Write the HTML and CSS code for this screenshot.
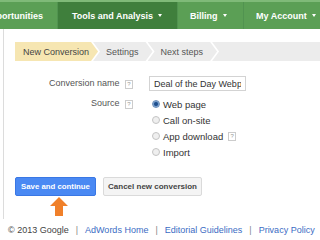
FILE: index.html
```html
<!DOCTYPE html>
<html>
<head>
        <meta charset="UTF-8">
        <title>New Conversion</title>
        <link rel="stylesheet" href="styles.css">
</head>
<body>
        <div id="nav">
                <span class="tab" id="tab_opp">Opportunities</span>
                <span class="tab current" id="tab_tools">Tools and Analysis <i class="caret"></i></span>
                <span class="tab" id="tab_billing">Billing <i class="caret"></i></span>
                <span class="tab" id="tab_account">My Account <i class="caret"></i></span>
        </div>

        <div id="main">
                <div id="steps">
                        <span class="step first active">New Conversion</span>
                        <span class="step">Settings</span>
                        <span class="step">Next steps</span>
                        <span class="step rest"></span>
                </div>

                <div class="row">
                        <label class="lbl">Conversion name <i class="help">?</i></label>
                        <div class="field"><input type="text" value="Deal of the Day Webpage"></div>
                </div>
                <div class="row">
                        <label class="lbl">Source <i class="help">?</i></label>
                        <div class="field radios">
                                <div class="opt"><span class="radio on"></span>Web page</div>
                                <div class="opt"><span class="radio"></span>Call on-site</div>
                                <div class="opt"><span class="radio"></span>App download <i class="help">?</i></div>
                                <div class="opt"><span class="radio"></span>Import</div>
                        </div>
                </div>

                <div id="actions">
                        <span class="button blue">Save and continue</span>
                        <span class="button grey">Cancel new conversion</span>
                        <svg class="pointer" width="18" height="19" viewBox="0 0 18 19">
                                <polygon points="9,0 18,9 13,9 13,19 5,19 5,9 0,9" fill="#f0802a"/>
                        </svg>
                </div>
        </div>

        <div id="footer">
                <span>&copy; 2013 Google</span>
                <span class="sep">|</span>
                <a href="#">AdWords Home</a>
                <span class="sep">|</span>
                <a href="#">Editorial Guidelines</a>
                <span class="sep">|</span>
                <a href="#">Privacy Policy</a>
        </div>
</body>
</html>
```

FILE: styles.css
```css
*{
        margin: 0;
        padding: 0;
}
body{
        width: 320px;
        height: 240px;
        overflow: hidden;
        font-family: "Liberation Sans", Arial, sans-serif;
        font-size: 9px;
        color: #444;
        background: white;
}
#nav{
        display: flex;
        height: 29px;
        background: #5b9f55;
        border-top: 2px solid #7fba78;
        box-sizing: border-box;
        overflow: hidden;
}
.tab{
        display: flex;
        align-items: center;
        flex-shrink: 0;
        color: white;
        font-weight: bold;
        font-size: 9px;
        border-right: 1px solid #519350;
        box-sizing: border-box;
        white-space: nowrap;
}
#tab_opp{
        width: 58px;
        justify-content: flex-end;
        padding-right: 14px;
}
#tab_tools{
        width: 120px;
        padding-left: 14px;
        background: #3f7f3c;
}
#tab_billing{
        width: 66px;
        padding-left: 12px;
}
#tab_account{
        width: 80px;
        padding-left: 12px;
        border-right: none;
}
.caret{
        display: inline-block;
        margin-left: 5px;
        border-left: 2.5px solid transparent;
        border-right: 2.5px solid transparent;
        border-top: 3px solid white;
}
#main{
        margin-left: 3px;
        border-left: 1px solid #dcdcdc;
        padding: 13px 0 0 11px;
        height: 190px;
        box-sizing: border-box;
}
#steps{
        display: flex;
        height: 19px;
        margin-bottom: 15px;
}
.step{
        display: flex;
        align-items: center;
        background: #ececec;
        color: #555;
        padding: 0 14px 0 13px;
        margin-left: -5px;
        white-space: nowrap;
        clip-path: polygon(0 0, calc(100% - 7px) 0, 100% 50%, calc(100% - 7px) 100%, 0 100%, 7px 50%);
}
.step.first{
        margin-left: 0;
        padding-left: 8px;
        padding-right: 9px;
        clip-path: polygon(0 0, calc(100% - 7px) 0, 100% 50%, calc(100% - 7px) 100%, 0 100%);
}
.step.active{
        background: #f6e6b2;
        color: #444;
}
.step.rest{
        flex: 1;
        clip-path: polygon(0 0, 100% 0, 100% 100%, 0 100%, 7px 50%);
}
.row{
        display: flex;
        margin-bottom: 5px;
}
.lbl{
        width: 118px;
        text-align: right;
        color: #555;
        line-height: 15px;
        flex-shrink: 0;
        white-space: nowrap;
}
.help{
        display: inline-block;
        width: 6px;
        height: 7px;
        margin-left: 3px;
        border: 1px solid #ccc;
        font-style: normal;
        font-size: 6px;
        line-height: 7px;
        text-align: center;
        color: #999;
        vertical-align: 0;
}
.field{
        margin-left: 16px;
}
.field input{
        display: block;
        width: 97px;
        height: 15px;
        border: 1px solid #d3d3d3;
        padding: 0 4px;
        box-sizing: border-box;
        font-family: "Liberation Sans", Arial, sans-serif;
        font-size: 9px;
        color: #333;
}
.radios{
        margin-left: 19px;
}
.opt{
        display: flex;
        align-items: center;
        height: 16px;
        color: #333;
        font-size: 9.5px;
        white-space: nowrap;
}
.opt .help{
        margin-left: 5px;
}
.radio{
        width: 6px;
        height: 6px;
        border-radius: 50%;
        border: 1px solid #c4c4c4;
        background: #efefef;
        margin-right: 3px;
        flex-shrink: 0;
}
.radio.on{
        border-color: #6a8db8;
        background: radial-gradient(circle, #1d4f8e 35%, #8aaed8 65%);
}
#actions{
        position: relative;
        display: flex;
        margin-top: 17px;
        gap: 7px;
}
.button{
        display: flex;
        align-items: center;
        justify-content: center;
        height: 19px;
        box-sizing: border-box;
        font-size: 7.8px;
        font-weight: bold;
        border-radius: 2px;
        white-space: nowrap;
}
.blue{
        width: 81px;
        background: #4a89f3;
        border: 1px solid #3a77e4;
        color: white;
}
.grey{
        width: 99px;
        background: #f4f4f4;
        border: 1px solid #dadada;
        color: #444;
        font-size: 8px;
}
.pointer{
        position: absolute;
        left: 35px;
        top: 20px;
}
#footer{
        display: flex;
        align-items: center;
        gap: 7px;
        height: 14px;
        padding-left: 8px;
        margin-top: 4px;
        color: #444;
        font-size: 9px;
        white-space: nowrap;
}
#footer a{
        color: #3b6cc4;
        text-decoration: none;
}
#footer .sep{
        color: #888;
}
```
